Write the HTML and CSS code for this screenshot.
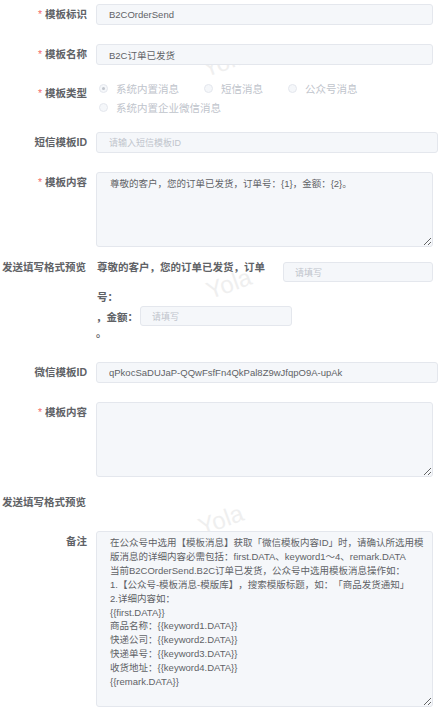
FILE: index.html
```html
<!DOCTYPE html>
<html>
<head>
    <title>模板详情</title>
    <link rel="stylesheet" href="styles.css">
</head>
<body>
    <div class="page">
        <div class="watermark wm-1">Yola</div>
        <div class="watermark wm-2">Yola</div>
        <div class="watermark wm-3">Yola</div>

        <div class="row">
            <label class="label required">模板标识</label>
            <div class="field">
                <input class="input" type="text" value="B2COrderSend" disabled>
            </div>
        </div>

        <div class="row row-name">
            <label class="label required">模板名称</label>
            <div class="field">
                <input class="input" type="text" value="B2C订单已发货" disabled>
            </div>
        </div>

        <div class="row row-type">
            <label class="label required">模板类型</label>
            <div class="field radio-group">
                <span class="radio checked"><i class="radio-dot"></i>系统内置消息</span>
                <span class="radio"><i class="radio-dot"></i>短信消息</span>
                <span class="radio"><i class="radio-dot"></i>公众号消息</span>
                <span class="radio"><i class="radio-dot"></i>系统内置企业微信消息</span>
            </div>
        </div>

        <div class="row row-sms">
            <label class="label">短信模板ID</label>
            <div class="field">
                <input class="input wide" type="text" placeholder="请输入短信模板ID" disabled>
            </div>
        </div>

        <div class="row row-content">
            <label class="label required">模板内容</label>
            <div class="field">
                <textarea class="textarea short" disabled>尊敬的客户，您的订单已发货，订单号：{1}，金额：{2}。</textarea>
            </div>
        </div>

        <div class="row row-preview">
            <label class="label preview-label">发送填写格式预览</label>
            <div class="field">
                <div class="pv-first">
                    <span class="pv-text">尊敬的客户，您的订单已发货，订单号：</span>
                    <input class="input pv-input" type="text" placeholder="请填写">
                </div>
                <div class="pv-second">
                    <span>，金额：</span>
                    <input class="input pv-input pv-input-2" type="text" placeholder="请填写">
                </div>
                <div class="pv-end">。</div>
            </div>
        </div>

        <div class="row">
            <label class="label">微信模板ID</label>
            <div class="field">
                <input class="input wide" type="text" value="qPkocSaDUJaP-QQwFsfFn4QkPal8Z9wJfqpO9A-upAk" disabled>
            </div>
        </div>

        <div class="row row-wx-content">
            <label class="label required">模板内容</label>
            <div class="field">
                <textarea class="textarea short" disabled></textarea>
            </div>
        </div>

        <div class="row row-wx-preview">
            <label class="label preview-label">发送填写格式预览</label>
            <div class="field"></div>
        </div>

        <div class="row">
            <label class="label">备注</label>
            <div class="field">
                <textarea class="textarea remark" disabled>在公众号中选用【模板消息】获取「微信模板内容ID」时，请确认所选用模版消息的详细内容必需包括：first.DATA、keyword1～4、remark.DATA
当前B2COrderSend.B2C订单已发货，公众号中选用模板消息操作如：
1.【公众号-模板消息-模版库】，搜索模版标题，如：「商品发货通知」
2.详细内容如：
{{first.DATA}}
商品名称：{{keyword1.DATA}}
快递公司：{{keyword2.DATA}}
快递单号：{{keyword3.DATA}}
收货地址：{{keyword4.DATA}}
{{remark.DATA}}</textarea>
            </div>
        </div>
    </div>
</body>
</html>
```

FILE: styles.css
```css
body {
    margin: 0;
    background-color: #ffffff;
    font-family: "Liberation Sans", "Noto Sans CJK SC", sans-serif;
    color: #606266;
    text-spacing-trim: space-all;
}
.page {
    position: relative;
    padding-top: 4px;
    overflow: hidden;
}
.watermark {
    position: absolute;
    font-size: 24px;
    color: #efefef;
    transform: rotate(-20deg);
    pointer-events: none;
}
.wm-1 {
    left: 202px;
    top: 48px;
}
.wm-2 {
    left: 206px;
    top: 270px;
}
.wm-3 {
    left: 198px;
    top: 506px;
}
.row {
    display: flex;
    margin-bottom: 19px;
    position: relative;
}
.label {
    width: 96px;
    flex-shrink: 0;
    box-sizing: border-box;
    padding-right: 9px;
    text-align: right;
    font-size: 10.5px;
    font-weight: bold;
    line-height: 21px;
    color: #606266;
    white-space: nowrap;
}
.label.required::before {
    content: "*";
    color: #f56c6c;
    margin-right: 3px;
    font-weight: normal;
}
.field {
    flex: 1;
    min-width: 0;
    padding-right: 6px;
}
.input {
    display: block;
    width: 100%;
    height: 21px;
    box-sizing: border-box;
    margin: 0;
    padding: 0 12px;
    background-color: #f5f7fa;
    border: 1px solid #e4e7ed;
    border-radius: 3px;
    font-family: inherit;
    font-size: 9.5px;
    color: #606266;
    outline: none;
}
.input::placeholder {
    color: #c0c4cc;
    font-size: 9px;
}
.input.wide {
    width: calc(100% + 5px);
}
.row-name {
    margin-bottom: 14px;
}
.row-type {
    margin-bottom: 15px;
}
.row-type .label {
    padding-top: 4px;
}
.radio-group {
    display: flex;
    flex-wrap: wrap;
    padding-left: 3px;
}
.radio {
    display: flex;
    align-items: center;
    height: 19px;
    margin-right: 25px;
    font-size: 10.5px;
    color: #c0c4cc;
}
.radio-dot {
    width: 9px;
    height: 9px;
    box-sizing: border-box;
    margin-right: 8px;
    border: 1px solid #e4e7ed;
    border-radius: 50%;
    background-color: #f5f7fa;
    display: flex;
    align-items: center;
    justify-content: center;
}
.radio.checked .radio-dot::after {
    content: "";
    width: 3px;
    height: 3px;
    border-radius: 50%;
    background-color: #c0c4cc;
}
.textarea {
    display: block;
    width: 100%;
    box-sizing: border-box;
    margin: 0;
    padding: 4px 4px 4px 13px;
    background-color: #f5f7fa;
    border: 1px solid #e4e7ed;
    border-radius: 3px;
    font-family: inherit;
    font-size: 9.5px;
    line-height: 13.9px;
    color: #606266;
    resize: vertical;
    outline: none;
}
.textarea.short {
    height: 75px;
}
.textarea.remark {
    height: 176px;
}
.row-content {
    margin-bottom: 5px;
}
.row-preview {
    margin-bottom: 22px;
}
.preview-label {
    padding-right: 0;
    padding-left: 2px;
    text-align: left;
    line-height: 30px;
}
.pv-first {
    display: flex;
    align-items: flex-start;
    height: 54px;
}
.pv-text {
    width: 172px;
    padding-left: 1px;
    font-size: 10.5px;
    font-weight: bold;
    line-height: 30px;
    color: #606266;
}
.pv-input {
    width: 150px;
    height: 20px;
    margin-top: 10px;
    margin-left: auto;
    padding: 0 11px;
}
.pv-second {
    display: flex;
    align-items: center;
    height: 20px;
    font-size: 10.5px;
    font-weight: bold;
}
.pv-input-2 {
    width: 152px;
    margin: 0 0 0 2px;
}
.pv-end {
    font-size: 10.5px;
    line-height: 14px;
    font-weight: bold;
}
.row-wx-content {
    margin-bottom: 15px;
}
.row-wx-preview {
    margin-bottom: 18px;
}
.row-wx-preview .preview-label {
    line-height: 21px;
}
```
